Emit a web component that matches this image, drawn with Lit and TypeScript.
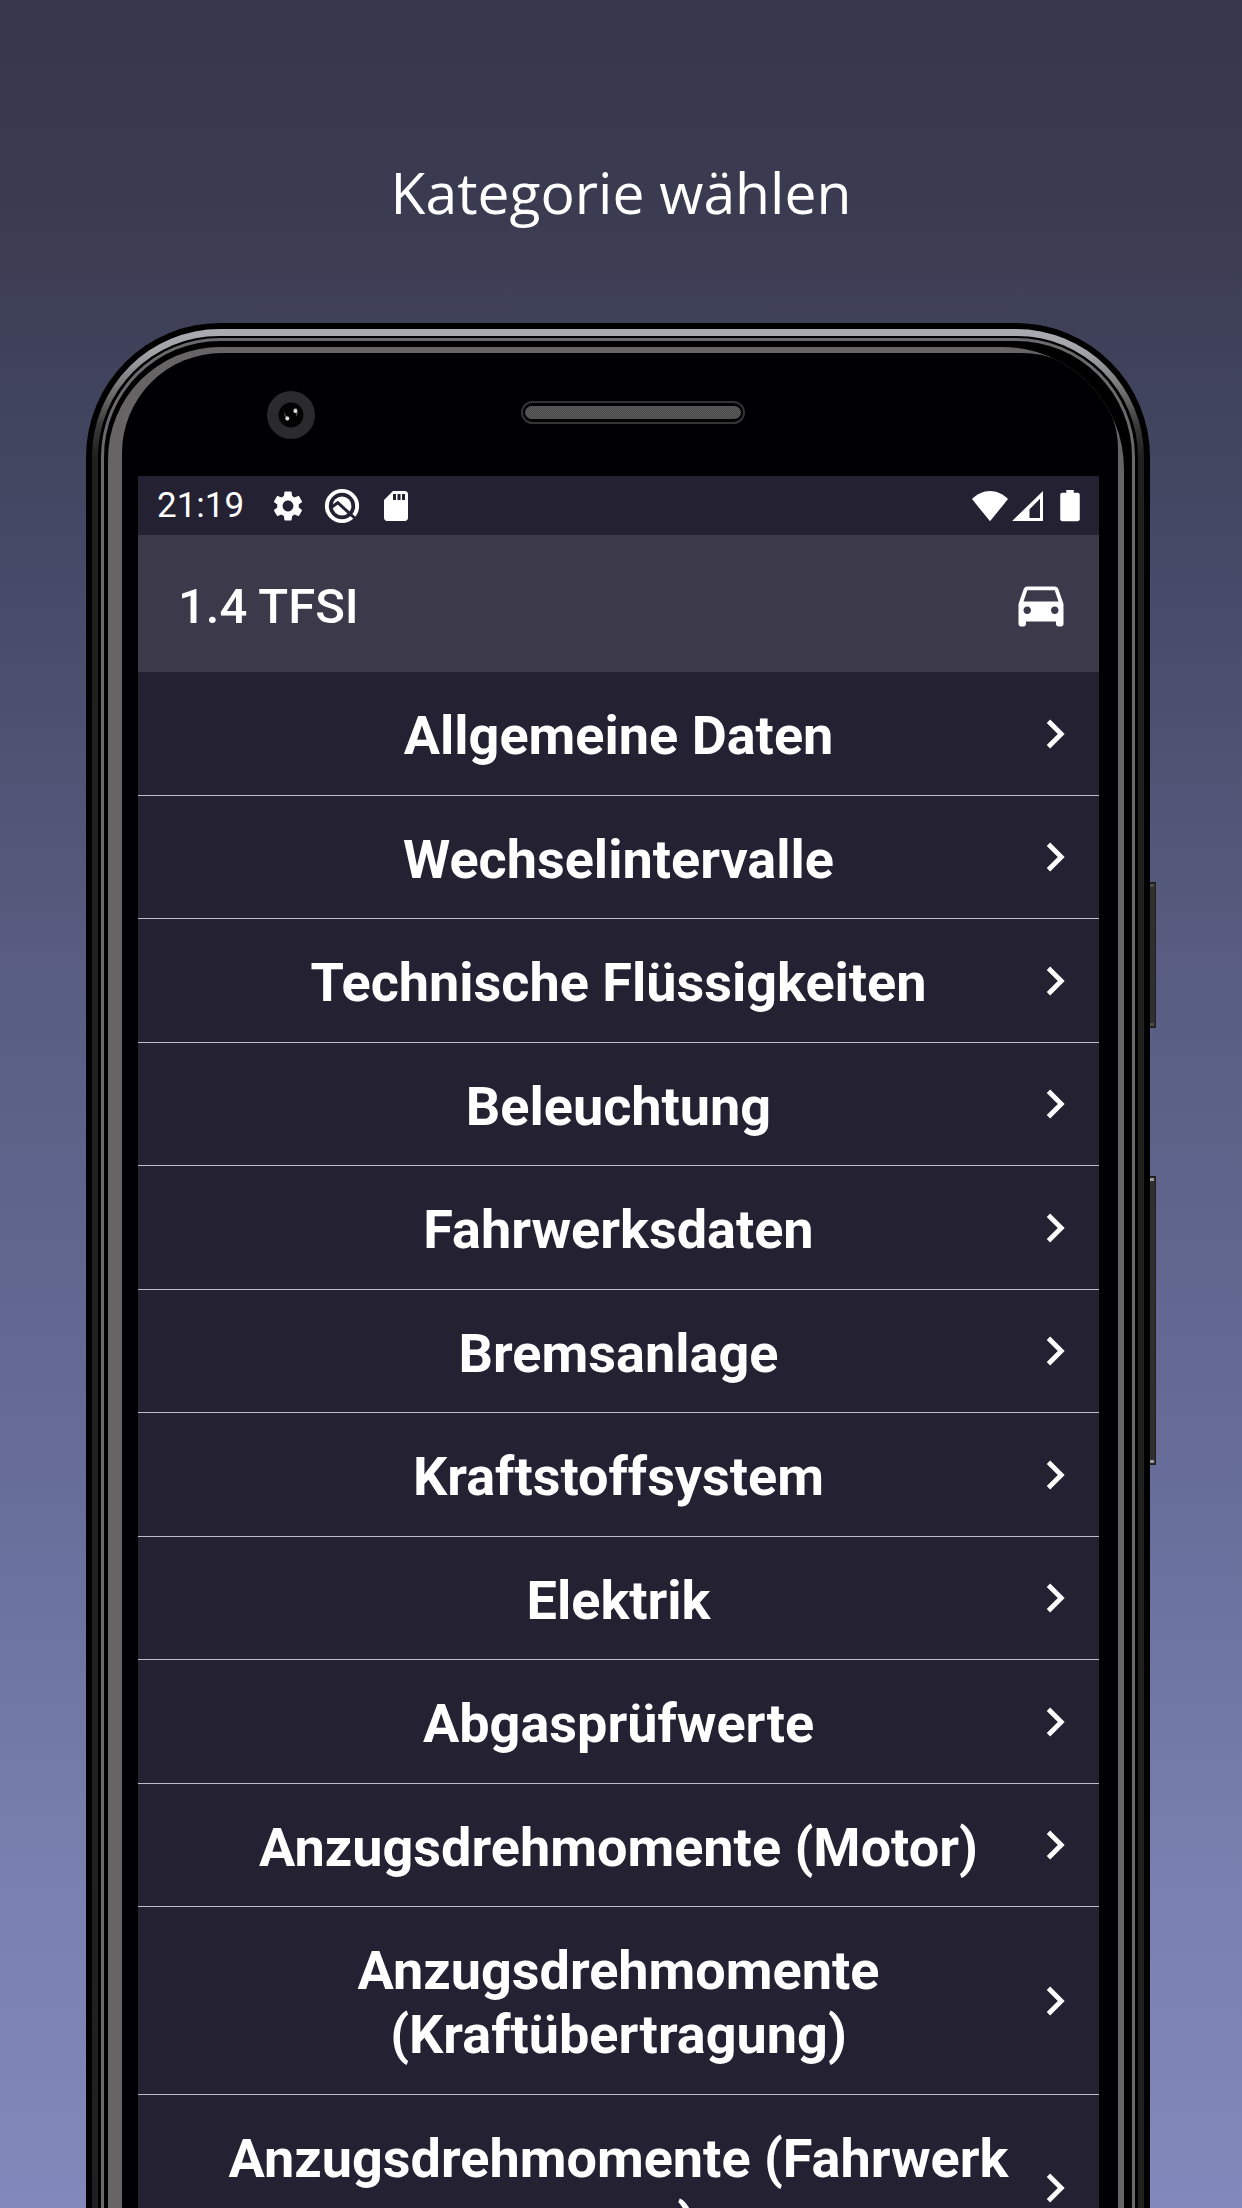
import { LitElement, html, css, svg } from "lit";
import { customElement, property } from "lit/decorators.js";

const CATEGORIES = [
  "Allgemeine Daten",
  "Wechselintervalle",
  "Technische Flüssigkeiten",
  "Beleuchtung",
  "Fahrwerksdaten",
  "Bremsanlage",
  "Kraftstoffsystem",
  "Elektrik",
  "Abgasprüfwerte",
  "Anzugsdrehmomente (Motor)",
  "Anzugsdrehmomente (Kraftübertragung)",
  "Anzugsdrehmomente (Fahrwerk vorne)",
];

const ICONS: Record<string, unknown> = {
  settings: svg`<path d="M19.14 12.94c.04-.3.06-.61.06-.94 0-.32-.02-.64-.07-.94l2.03-1.58c.18-.14.23-.41.12-.61l-1.92-3.32c-.12-.22-.37-.29-.59-.22l-2.39.96c-.5-.38-1.03-.7-1.62-.94l-.36-2.54c-.04-.24-.24-.41-.48-.41h-3.84c-.24 0-.43.17-.47.41l-.36 2.54c-.59.24-1.13.57-1.62.94l-2.39-.96c-.22-.08-.47 0-.59.22L2.74 8.87c-.12.21-.08.47.12.61l2.03 1.58c-.05.3-.09.63-.09.94s.02.64.07.94l-2.03 1.58c-.18.14-.23.41-.12.61l1.92 3.32c.12.22.37.29.59.22l2.39-.96c.5.38 1.03.7 1.62.94l.36 2.54c.05.24.24.41.48.41h3.84c.24 0 .44-.17.47-.41l.36-2.54c.59-.24 1.13-.56 1.62-.94l2.39.96c.22.08.47 0 .59-.22l1.92-3.32c.12-.22.07-.47-.12-.61l-2.01-1.58zM12 15.6c-1.98 0-3.6-1.62-3.6-3.6s1.62-3.6 3.6-3.6 3.6 1.62 3.6 3.6-1.62 3.6-3.6 3.6z"/>`,
  search: svg`<circle cx="12" cy="12" r="10.1" fill="none" stroke="currentColor" stroke-width="2.6"/><circle cx="12" cy="12" r="6.3"/><path d="M4.5 13.2 9.2 9.8 21.5 21" fill="none" stroke="#232132" stroke-width="2"/>`,
  sd: svg`<path d="M18 2h-8L4.02 8 4 20c0 1.1.9 2 2 2h12c1.1 0 2-.9 2-2V4c0-1.1-.9-2-2-2zm-6 6h-2V4h2v4zm3 0h-2V4h2v4zm3 0h-2V4h2v4z"/>`,
  wifi: svg`<path d="M12 22.2 0 7.4C3.3 4 7.5 2 12 2s8.7 2 12 5.4z"/>`,
  signal: svg`<path fill-rule="evenodd" d="M22 2v20H1.4zM20 7.2 13 14.2V20h7z"/>`,
  battery: svg`<path d="M17.2 3.2h-2.7V1.4h-5v1.8H6.8c-.7 0-1.3.6-1.3 1.3v16.4c0 .7.6 1.3 1.3 1.3h10.4c.7 0 1.3-.6 1.3-1.3V4.5c0-.7-.6-1.3-1.3-1.3z"/>`,
  car: svg`<path d="M18.92 6.01C18.72 5.42 18.16 5 17.5 5h-11c-.66 0-1.21.42-1.42 1.01L3 12v8c0 .55.45 1 1 1h1c.55 0 1-.45 1-1v-1h12v1c0 .55.45 1 1 1h1c.55 0 1-.45 1-1v-8l-2.08-5.99zM6.5 16c-.83 0-1.5-.67-1.5-1.5S5.67 13 6.5 13s1.5.67 1.5 1.5S7.33 16 6.5 16zm11 0c-.83 0-1.5-.67-1.5-1.5s.67-1.5 1.5-1.5 1.5.67 1.5 1.5-.67 1.5-1.5 1.5zM5 11l1.5-4.5h11L19 11H5z"/>`,
  chevron: svg`<path d="M10 6 8.59 7.41 13.17 12l-4.58 4.59L10 18l6-6z"/>`,
};

@customElement("ui-icon")
export class UiIcon extends LitElement {
  @property() name = "";
  static styles = css`
    :host { display: block; width: 36px; height: 36px; flex: none; }
    svg { display: block; width: 100%; height: 100%; fill: currentColor; }
  `;
  render() {
    return html`<svg viewBox="0 0 24 24" aria-hidden="true">${ICONS[this.name]}</svg>`;
  }
}

@customElement("status-bar")
export class StatusBar extends LitElement {
  static styles = css`
    :host {
      display: flex;
      align-items: center;
      justify-content: space-between;
      height: 59px;
      padding: 0 11px 0 19px;
      background: #232132;
    }
    .group { display: flex; align-items: center; gap: 18px; }
    .signals { gap: 2px; }
    .time { font-size: 35px; line-height: 44px; margin-right: 8px; }
    .battery { margin-left: 4px; }
  `;
  render() {
    return html`
      <div class="group">
        <span class="time">21:19</span>
        <ui-icon name="settings"></ui-icon>
        <ui-icon name="search"></ui-icon>
        <ui-icon name="sd"></ui-icon>
      </div>
      <div class="group signals">
        <ui-icon name="wifi"></ui-icon>
        <ui-icon name="signal"></ui-icon>
        <ui-icon class="battery" name="battery"></ui-icon>
      </div>
    `;
  }
}

@customElement("category-list")
export class CategoryList extends LitElement {
  static styles = css`
    :host { display: block; background: #232132; }
    ul { list-style: none; margin: 0; padding: 0; }
    .row {
      display: grid;
      grid-template-columns: 73px 1fr 73px;
      align-items: center;
      border-bottom: 1px solid #bdbcc9;
      color: #fff;
      text-decoration: none;
    }
    .label {
      grid-column: 2;
      padding: 32px 0 27px;
      font-size: 54px;
      line-height: 64px;
      font-weight: 700;
      text-align: center;
    }
    li:nth-child(even) .label { padding-bottom: 26px; }
    .chevron { width: 58px; height: 58px; }
  `;
  render() {
    return html`
      <nav aria-label="Kategorien">
        <ul>
          ${CATEGORIES.map(
            (name) => html`<li>
              <a class="row" href="#">
                <span class="label">${name}</span>
                <ui-icon class="chevron" name="chevron"></ui-icon>
              </a>
            </li>`,
          )}
        </ul>
      </nav>
    `;
  }
}

@customElement("phone-frame")
export class PhoneFrame extends LitElement {
  static styles = css`
    :host { display: block; position: relative; }
    .shell {
      background: #000;
      border-radius: 134px 134px 0 0;
      padding: 6px 6px 0;
    }
    .metal {
      border-radius: 128px 128px 0 0;
      padding: 7px 6px 0;
      background: linear-gradient(#abacb3 0, #a2a3a8 24px, #6f706d 64px, #3a3a38 96px, #20201f 128px);
    }
    .groove { background: #000; border-radius: 121px 121px 0 0; padding: 2px 3px 0; }
    .rim { background: #6a6a6c; border-radius: 119px 119px 0 0; padding: 3px 3px 0; }
    .seam { background: #000; border-radius: 116px 116px 0 0; padding: 6px 8px 0 4px; }
    .glass {
      background: #666465;
      border-radius: 112px 122px 0 0;
      padding: 6px 6px 0 14px;
      overflow: hidden;
    }
    .face { background: #000002; border-radius: 100px 96px 0 0; padding: 0 19px 0 16px; }
    .top {
      display: flex;
      align-items: center;
      gap: 206px;
      height: 123px;
      padding-left: 129px;
    }
    .camera { width: 48px; height: 48px; flex: none; }
    .speaker {
      width: 224px;
      height: 23px;
      box-sizing: border-box;
      margin-bottom: 4px;
      border: 2px solid #333335;
      border-radius: 12px;
      padding: 3px 2px;
      background: #000;
    }
    .grille {
      height: 100%;
      border-radius: 8px;
      background: repeating-conic-gradient(#5e5e5e 0 25%, #474747 0 50%) 0 0 / 2px 2px;
    }
    .key {
      position: absolute;
      left: 100%;
      width: 6px;
      box-sizing: border-box;
      background: #2f302e;
      border: solid #1f201f;
      border-width: 2px 1px 2px 0;
    }
    .key::before,
    .key::after {
      content: "";
      position: absolute;
      left: 0;
      width: 4px;
      height: 3px;
      background: #4d4e4c;
    }
    .key::before { top: 0; }
    .key::after { bottom: 0; }
    .power { top: 559px; height: 146px; }
    .volume { top: 853px; height: 289px; }
    .volume::before,
    .volume::after { background: #9b9b9b; }
  `;
  render() {
    return html`
      <div class="key power"></div>
      <div class="key volume"></div>
      <div class="shell"><div class="metal"><div class="groove"><div class="rim"><div class="seam"><div class="glass">
        <div class="face">
          <div class="top">
            <svg class="camera" viewBox="0 0 48 48" aria-hidden="true">
              <circle cx="24" cy="24" r="24" fill="#2b2b2d"/>
              <circle cx="24" cy="24" r="12.5" fill="#020203"/>
              <path d="M26.5 19a2 2 0 0 1 4 0c.8 3-.2 5.5-1.5 6.5.6-3-.5-4-2.5-6.5z" fill="#555"/>
              <path d="M17.5 20c-1 3 .5 5 1 7a2 2 0 1 0 2.5-1.5C18.5 24.5 17.5 23 17.5 20z" fill="#555"/>
              <circle cx="28.3" cy="20" r="1.9" fill="#ddd"/>
              <circle cx="20.3" cy="27.5" r="1.9" fill="#ddd"/>
            </svg>
            <div class="speaker"><div class="grille"></div></div>
          </div>
          <slot></slot>
        </div>
      </div></div></div></div></div></div>
    `;
  }
}

@customElement("app-root")
export class AppRoot extends LitElement {
  static styles = css`
    :host {
      display: block;
      height: 100vh;
      overflow: hidden;
      color: #fff;
      font-family: Roboto, "Liberation Sans", sans-serif;
      background: linear-gradient(#36374b 0%, #3a3b50 9%, #3f4159 15%, #454966 25%, #575c80 43%, #686e9a 68%, #7a81b0 86%, #8188bb 100%);
    }
    .headline {
      margin: 0;
      padding: 152px 0 91px;
      font-family: "Open Sans", "Noto Sans", sans-serif;
      font-size: 57px;
      line-height: 80px;
      font-weight: 400;
      text-align: center;
    }
    .phone { margin: 0 92px 0 86px; }
    .app-bar {
      display: flex;
      align-items: center;
      justify-content: space-between;
      height: 137px;
      padding: 0 28px 0 40px;
      box-sizing: border-box;
      background: #3c394b;
    }
    .title { margin: 0; padding-top: 6px; font-size: 49px; line-height: 60px; font-weight: 500; }
    .car {
      padding: 0;
      border: 0;
      background: none;
      color: inherit;
      cursor: pointer;
    }
    .car-icon { width: 60px; height: 60px; }
  `;
  render() {
    return html`
      <h1 class="headline">Kategorie wählen</h1>
      <phone-frame class="phone">
        <status-bar></status-bar>
        <header class="app-bar">
          <h2 class="title">1.4 TFSI</h2>
          <button class="car" type="button" aria-label="Fahrzeug">
            <ui-icon class="car-icon" name="car"></ui-icon>
          </button>
        </header>
        <category-list></category-list>
      </phone-frame>
    `;
  }
}
